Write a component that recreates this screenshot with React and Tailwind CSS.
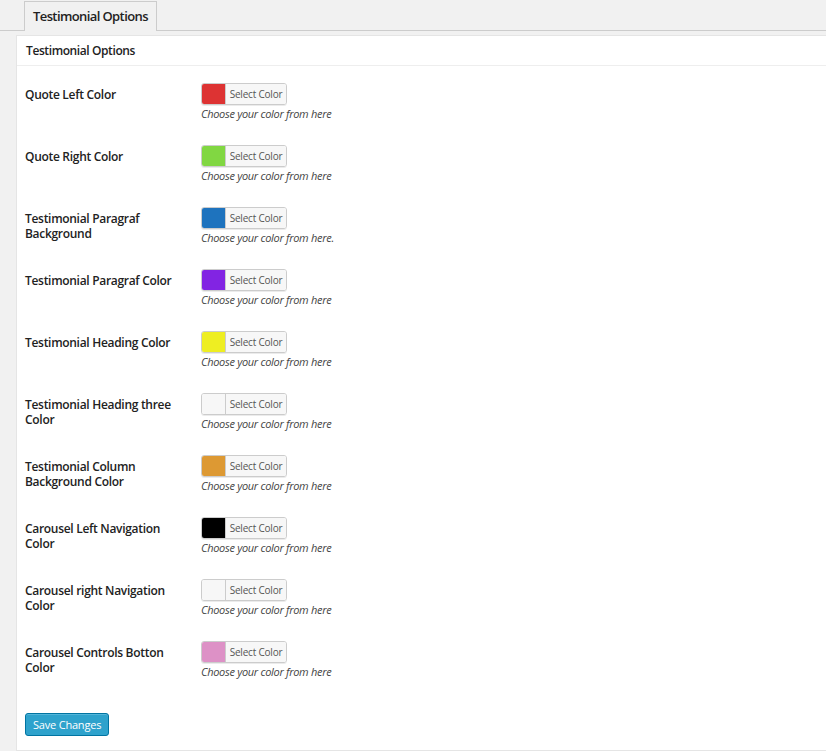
const fields = [
  { label: 'Quote Left Color', color: '#dd3333' },
  { label: 'Quote Right Color', color: '#81d742' },
  { label: 'Testimonial Paragraf Background', color: '#1e73be', dot: true },
  { label: 'Testimonial Paragraf Color', color: '#8224e3' },
  { label: 'Testimonial Heading Color', color: '#eeee22' },
  { label: 'Testimonial Heading three Color', color: '#f7f7f7' },
  { label: 'Testimonial Column Background Color', color: '#dd9933' },
  { label: 'Carousel Left Navigation Color', color: '#000000' },
  { label: 'Carousel right Navigation Color', color: '#f7f7f7' },
  { label: 'Carousel Controls Botton Color', color: '#dd91c6' },
];

function ColorField({ label, color, dot }) {
  return (
    <div className="flex h-[62px]">
      <div className="w-[184px] shrink-0 pl-[8px] pr-[21px] pt-[4px]">
        <span className="block text-[12px] leading-[15px] font-semibold tracking-[-0.3px] text-[#222]">{label}</span>
      </div>
      <div className="shrink-0">
        <div className="flex h-[22px] w-[86px] rounded-[3px] border border-[#ccc] overflow-hidden shadow-[0_1px_0_rgba(0,0,0,0.08)]">
          <span className="w-[24px] shrink-0 h-full border-r border-[#ccc]" style={{ backgroundColor: color }} />
          <span className="flex-1 bg-[#f7f7f7] text-[10px] tracking-[-0.2px] whitespace-nowrap text-[#555] flex items-center justify-center">Select Color</span>
        </div>
        <p className="mt-[1px] text-[11px] leading-[15px] italic tracking-[-0.3px] whitespace-nowrap text-[#444]">
          Choose your color from here{dot ? '.' : ''}
        </p>
      </div>
    </div>
  );
}

export default function App() {
  return (
    <div className="min-h-[751px] bg-[#f1f1f1] font-['Open_Sans',sans-serif] text-[#444]">
      <div className="flex border-b border-[#ccc] h-[31px]">
        <div className="ml-[24px] mt-[1px] px-[8px] border border-b-0 border-[#ccc] bg-[#f1f1f1] flex items-center text-[13px] font-semibold tracking-[-0.6px] text-[#222] h-[30px]">
          Testimonial Options
        </div>
      </div>
      <div className="ml-[16px] mt-[4px] bg-white border border-r-0 border-[#e5e5e5] min-h-[716px]">
        <div className="h-[30px] border-b border-[#eee] pl-[9px] flex items-center text-[12px] font-semibold tracking-[-0.4px] text-[#222]">
          Testimonial Options
        </div>
        <div className="pt-[17px]">
          {fields.map((f) => (
            <ColorField key={f.label} {...f} />
          ))}
        </div>
        <div className="pl-[8px] pt-[8px]">
          <button className="h-[23px] px-[7px] rounded-[3px] bg-[#2ea2cc] border border-[#0074a2] text-white text-[11px] tracking-[-0.2px] leading-none shadow-[inset_0_1px_0_rgba(120,200,230,0.5)]">
            Save Changes
          </button>
        </div>
      </div>
    </div>
  );
}
